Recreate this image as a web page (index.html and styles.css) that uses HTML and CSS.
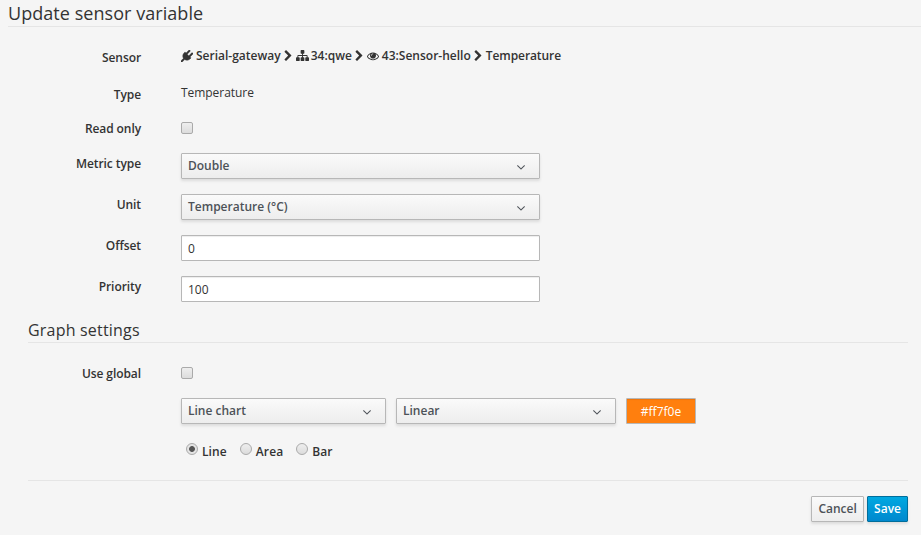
FILE: index.html
```html
<!DOCTYPE html>
<html lang="en">
<head>
<meta charset="utf-8">
<title>Update sensor variable</title>
<link rel="stylesheet" href="styles.css">
</head>
<body>
<svg class="defs" aria-hidden="true">
  <symbol id="plug" viewBox="0 0 1792 1792"><path d="M1755 453q37 38 37 90.5t-37 90.5l-401 400 150 150-160 160q-163 163-389.5 186.5t-411.5-100.5l-362 362h-181v-181l362-362q-124-185-100.5-411.5t186.5-389.5l160-160 150 150 400-401q38-37 91-37t90 37 37 90.5-37 90.5l-400 401 234 234 401-400q38-37 91-37t90 37z"/></symbol>
  <symbol id="chevron" viewBox="300 0 1142 1792"><path d="M1363 877l-742 742q-19 19-45 19t-45-19l-166-166q-19-19-19-45t19-45l531-531-531-531q-19-19-19-45t19-45l166-166q19-19 45-19t45 19l742 742q19 19 19 45t-19 45z"/></symbol>
  <symbol id="sitemap" viewBox="0 0 1792 1792"><path d="M1792 1248v320q0 40-28 68t-68 28h-320q-40 0-68-28t-28-68v-320q0-40 28-68t68-28h96v-192h-512v192h96q40 0 68 28t28 68v320q0 40-28 68t-68 28h-320q-40 0-68-28t-28-68v-320q0-40 28-68t68-28h96v-192h-512v192h96q40 0 68 28t28 68v320q0 40-28 68t-68 28h-320q-40 0-68-28t-28-68v-320q0-40 28-68t68-28h96v-192q0-52 38-90t90-38h512v-192h-96q-40 0-68-28t-28-68v-320q0-40 28-68t68-28h320q40 0 68 28t28 68v320q0 40-28 68t-68 28h-96v192h512q52 0 90 38t38 90v192h96q40 0 68 28t28 68z"/></symbol>
  <symbol id="eye" viewBox="0 0 1792 1792"><path d="M1664 960q-152-236-381-353 61 104 61 225 0 185-131.5 316.5t-316.5 131.5-316.5-131.5-131.5-316.5q0-121 61-225-229 117-381 353 133 205 333.5 326.5t434.5 121.5 434.5-121.5 333.5-326.5zm-720-384q0-20-14-34t-34-14q-125 0-214.5 89.5t-89.5 214.5q0 20 14 34t34 14 34-14 14-34q0-86 61-147t147-61q20 0 34-14t14-34zm848 384q0 34-20 69-140 230-376.5 368.5t-499.5 138.5-499.5-139-376.5-368q-20-35-20-69t20-69q140-229 376.5-368t499.5-139 499.5 139 376.5 368q20 35 20 69z"/></symbol>
  <symbol id="angle" viewBox="384 640 1024 640"><path d="M1395 736q0 13-10 23l-466 466q-10 10-23 10t-23-10l-466-466q-10-10-10-23t10-23l50-50q10-10 23-10t23 10l393 393 393-393q10-10 23-10t23 10l50 50q10 10 10 23z"/></symbol>
</svg>
<h1 class="title">Update sensor variable</h1>
<form class="form">
  <div class="row row-sensor">
    <span class="label">Sensor</span>
    <div class="path">
      <svg class="icon plug"><use href="#plug"/></svg><span class="crumb c1">Serial-gateway</span>
      <svg class="sep"><use href="#chevron"/></svg>
      <svg class="icon sitemap"><use href="#sitemap"/></svg><span class="crumb c2">34:qwe</span>
      <svg class="sep"><use href="#chevron"/></svg>
      <svg class="icon eye"><use href="#eye"/></svg><span class="crumb c3">43:Sensor-hello</span>
      <svg class="sep"><use href="#chevron"/></svg>
      <span class="crumb c4">Temperature</span>
    </div>
  </div>
  <div class="row row-type"><span class="label">Type</span><span class="value">Temperature</span></div>
  <div class="row row-check"><label class="label" for="ro">Read only</label><input class="check" type="checkbox" id="ro"></div>
  <div class="row"><span class="label">Metric type</span><button type="button" class="select">Double<svg class="caret"><use href="#angle"/></svg></button></div>
  <div class="row"><span class="label">Unit</span><button type="button" class="select">Temperature (°C)<svg class="caret"><use href="#angle"/></svg></button></div>
  <div class="row"><label class="label" for="offset">Offset</label><input class="text" id="offset" value="0"></div>
  <div class="row"><label class="label" for="priority">Priority</label><input class="text" id="priority" value="100"></div>

  <h2 class="subtitle">Graph settings</h2>
  <div class="row row-global"><label class="label" for="ug">Use global</label><input class="check" type="checkbox" id="ug"></div>
  <div class="graph">
    <button type="button" class="select chart">Line chart<svg class="caret"><use href="#angle"/></svg></button>
    <button type="button" class="select scale">Linear<svg class="caret"><use href="#angle"/></svg></button>
    <input class="text color" value="#ff7f0e" aria-label="Color">
  </div>
  <div class="radios">
    <label class="option"><input class="radio" type="radio" name="kind" checked><span>Line</span></label>
    <label class="option"><input class="radio" type="radio" name="kind"><span>Area</span></label>
    <label class="option"><input class="radio" type="radio" name="kind"><span>Bar</span></label>
  </div>
  <div class="actions"><button type="button" class="btn cancel">Cancel</button><button type="button" class="btn primary">Save</button></div>
</form>
</body>
</html>
```
FILE: styles.css
```css
* { box-sizing: border-box; }
body {
  margin: 0;
  padding-left: 8px;
  height: 535px;
  overflow: hidden;
  background: #f5f5f5;
  color: #333;
  font: 12px/20px "Open Sans", sans-serif;
}
.defs { display: none; }
svg { fill: currentColor; flex: none; }
.title {
  margin: 0;
  height: 27px;
  border-bottom: 1px solid #e5e5e5;
  font-size: 18px;
  font-weight: 400;
  letter-spacing: .05px;
  line-height: 27px;
}
.form { padding: 20px 13px 0 20px; }
.row {
  display: grid;
  grid-template-columns: 113px 359px;
  column-gap: 40px;
  height: 26px;
  margin-bottom: 15px;
}
.label { padding-top: 1px; text-align: right; font-weight: 600; letter-spacing: -.08px; }
.row-sensor { grid-template-columns: 113px 1fr; height: 20px; margin-bottom: 17px; }
.path { display: flex; align-items: center; height: 18px; font-weight: 600; white-space: nowrap; }
.c4 { letter-spacing: -.08px; }
.icon { width: 12px; height: 12px; }
.plug { margin-right: 3px; stroke: currentColor; stroke-width: 60; }
.sitemap { width: 13px; height: 13px; margin: -1px 2px 0 0; }
.eye { margin-right: 3px; }
.sep { width: 8px; height: 12px; margin: 0 4px 0 3px; }
.row-type { height: 20px; margin-bottom: 14px; }
.value { margin-top: -1px; letter-spacing: -.05px; }
.row-check { height: 20px; }
.check, .radio {
  appearance: none;
  width: 12px;
  height: 12px;
  border: 1px solid #aaa;
  background: linear-gradient(#eee, #dcdcdc);
}
.check { margin: 4px 0 0; border-radius: 2px; }
.select, .text, .btn {
  height: 26px;
  border: 1px solid #b7b7b7;
  border-radius: 1px;
  padding: 0 6px;
  font: 600 12px/22px "Open Sans", sans-serif;
}
.select, .btn {
  background: linear-gradient(#fafafa, #ededed);
  box-shadow: 0 2px 3px rgba(3, 3, 3, .1);
  color: #4d5258;
}
.select { display: flex; align-items: center; justify-content: space-between; text-align: left; }
.caret { width: 8px; height: 5px; margin: 2px 8px 0 0; }
.row .select .caret { margin-right: 8px; }
.text {
  background: #fff;
  box-shadow: inset 0 1px 1px rgba(3, 3, 3, .075);
  color: #333;
  font-weight: 400;
}
.subtitle {
  margin: 0 0 20px;
  height: 26px;
  border-bottom: 1px solid #e5e5e5;
  font-size: 16px;
  font-weight: 400;
  letter-spacing: .2px;
  line-height: 26px;
}
.row-global { height: 20px; }
.graph { display: flex; gap: 10px; margin-left: 153px; }
.chart { width: 205px; }
.scale { width: 220px; }
.color { width: 70px; background: #ff7f0e; color: #fff; text-align: center; }
.radios { display: flex; gap: 13px; height: 56px; margin-left: 158px; padding-top: 17px; font-weight: 600; }
.option { display: flex; height: 20px; }
.option span { padding-top: 1px; letter-spacing: .1px; }
.radio { flex: none; margin: 2px 4px 0 0; border-radius: 50%; }
.radio:checked { background: radial-gradient(circle, #555 0 2.5px, #e4e4e4 3.3px); }
.actions { display: flex; justify-content: flex-end; gap: 3px; border-top: 1px solid #e5e5e5; padding-top: 15px; }
.cancel { width: 53px; }
.primary { border-color: #006e9c; background: linear-gradient(#00a8e1, #0088ce); color: #fff; }
```
